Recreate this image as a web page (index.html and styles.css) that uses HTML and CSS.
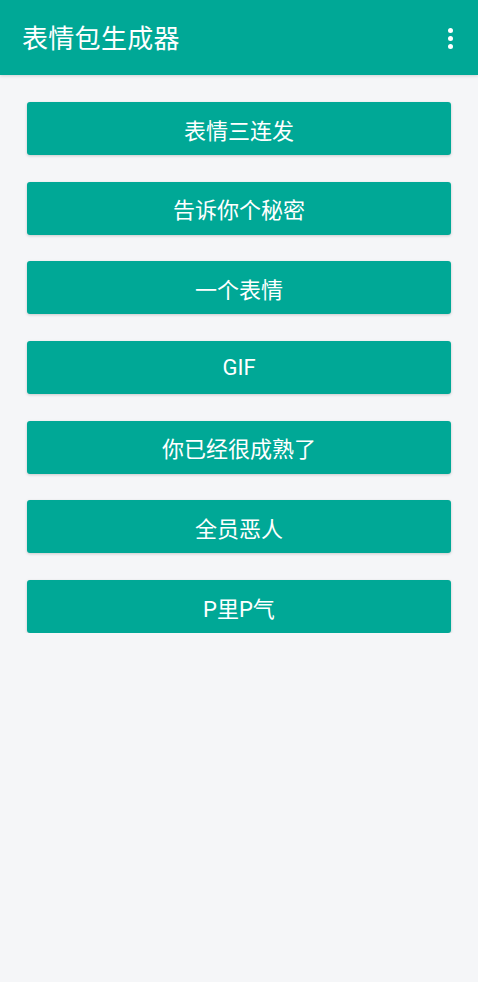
FILE: index.html
```html
<!DOCTYPE html>
<html lang="zh-CN">
<head>
<meta charset="utf-8">
<title>表情包生成器</title>
<link rel="stylesheet" href="styles.css">
</head>
<body>
<header class="appbar">
  <h1 class="title">表情包生成器</h1>
  <button class="menu" aria-label="更多">
    <span class="dot"></span><span class="dot"></span><span class="dot"></span>
  </button>
</header>
<main class="list">
  <button class="item">表情三连发</button>
  <button class="item">告诉你个秘密</button>
  <button class="item">一个表情</button>
  <button class="item">GIF</button>
  <button class="item">你已经很成熟了</button>
  <button class="item">全员恶人</button>
  <button class="item">P里P气</button>
</main>
</body>
</html>
```
FILE: styles.css
```css
* { box-sizing: border-box; }
html, body {
  margin: 0;
  padding: 0;
  background: #f5f6f8;
  font-family: Roboto, "Noto Sans CJK SC", sans-serif;
}
.appbar {
  height: 75px;
  background: #00a896;
  display: flex;
  align-items: center;
  justify-content: space-between;
  padding: 0 20px 0 22px;
  box-shadow: 0 1px 3px rgba(0,0,0,0.15);
}
.title {
  margin: 0;
  color: #fff;
  font-size: 26px;
  font-weight: 400;
  letter-spacing: 0.3px;
  line-height: 1;
  margin-top: 2px;
}
.menu {
  background: none;
  border: 0;
  padding: 0;
  width: 16px;
  display: flex;
  flex-direction: column;
  align-items: center;
  gap: 3px;
  margin-top: 1px;
}
.dot {
  width: 5px;
  height: 5px;
  border-radius: 50%;
  background: #fff;
}
.list {
  padding: 27px 27px 0 27px;
  display: flex;
  flex-direction: column;
  gap: 26.7px;
}
.item {
  height: 53px;
  width: 100%;
  border: 0;
  border-radius: 3px;
  background: #00a896;
  color: #fff;
  font-family: Roboto, "Noto Sans CJK SC", sans-serif;
  font-size: 22px;
  box-shadow: 0 1px 3px rgba(0,0,0,0.18);
  padding: 0;
}
```
